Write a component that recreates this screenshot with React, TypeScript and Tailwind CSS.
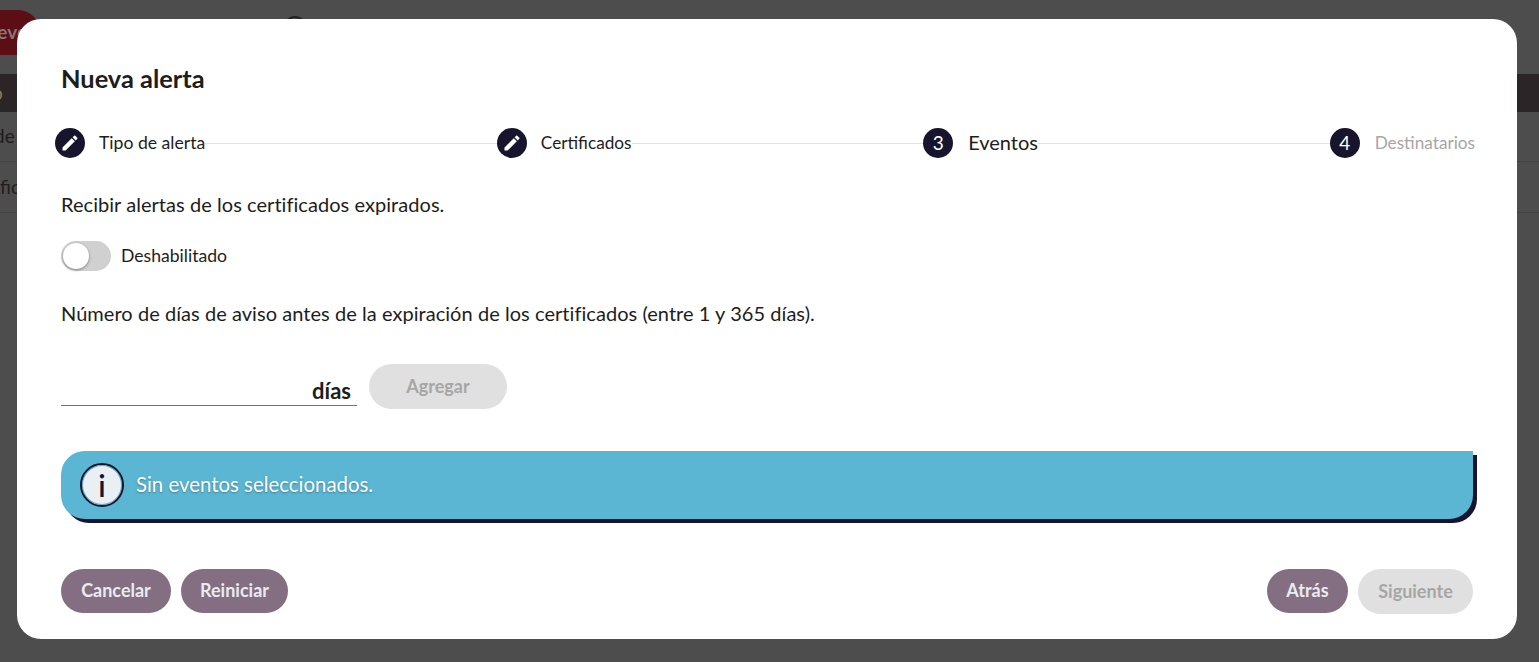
import { MdEdit } from "react-icons/md";

const font = "font-['Lato','Liberation_Sans',sans-serif]";

function StepIcon({ children }: { children: React.ReactNode }) {
  return (
    <span className="w-[30px] h-[30px] shrink-0 rounded-full bg-[#17152e] text-white flex items-center justify-center text-[19px]">
      {children}
    </span>
  );
}

function StepLine() {
  return <span className="flex-1 h-px bg-[#e0e0e0]"></span>;
}

function Background() {
  return (
    <div className="h-full bg-[#4d4d4d] text-[#1d1d1d] text-[19px] overflow-hidden">
      {/* HEADER */}
      <div className="h-[74px] pt-[10px] flex items-start">
        <span className="w-[80px] h-[45px] -ml-[40px] shrink-0 rounded-[22px] bg-[#5b0f15] text-[#8a7474] font-bold flex items-center justify-center">
          Nuevo
        </span>
        <span className="w-[24px] h-[24px] ml-[243px] mt-[6px] rounded-full border-2 border-[#222]"></span>
      </div>
      {/* TABLE */}
      <div className="h-[38px] bg-[#2c2528] text-[#8a7a60] flex items-center">
        <span className="-ml-[8px]">o</span>
      </div>
      <div className="h-[50px] border-b border-[#444] flex items-center">
        <span className="-ml-[6px]">de</span>
      </div>
      <div className="h-[51px] border-b border-[#444] flex items-center">fic</div>
    </div>
  );
}

export default function App() {
  return (
    <div className={`relative w-[1539px] h-[662px] overflow-hidden ${font}`}>
      <Background />

      {/* MODAL */}
      <div className="absolute left-[17px] top-[19px] w-[1500px] h-[620px] rounded-[24px] bg-white pt-[43px] px-[44px] text-[#1d1d1d] flex flex-col">
        <h1 className="h-[32px] text-[25.4px] leading-[32px] font-bold">Nueva alerta</h1>

        {/* STEPPER */}
        <div className="mt-[34px] h-[30px] -ml-[6px] mr-[-2px] flex items-center text-[17.6px]">
          <StepIcon>
            <MdEdit size={20} />
          </StepIcon>
          <span className="ml-[14px]">Tipo de alerta</span>
          <StepLine />
          <StepIcon>
            <MdEdit size={20} />
          </StepIcon>
          <span className="ml-[14px] text-[17.2px]">Certificados</span>
          <StepLine />
          <StepIcon>3</StepIcon>
          <span className="ml-[15px] pb-[2px] text-[20px]">Eventos</span>
          <StepLine />
          <StepIcon>4</StepIcon>
          <span className="ml-[15px] text-[17.2px] text-[#a6a6a6]">Destinatarios</span>
        </div>

        <p className="mt-[33px] h-[28px] text-[20px] leading-[27px] tracking-[0.05px]">
          Recibir alertas de los certificados expirados.
        </p>

        {/* TOGGLE */}
        <div className="mt-[22px] h-[30px] flex items-center gap-[10px] text-[17.6px]">
          <span className="w-[50px] h-[30px] rounded-full bg-[#d0d0d0] p-[2px]">
            <span className="block w-[26px] h-[26px] rounded-full bg-white shadow-[0_1px_3px_rgba(0,0,0,0.4)]"></span>
          </span>
          <span>Deshabilitado</span>
        </div>

        <p className="mt-[29px] h-[28px] text-[20px] leading-[27px] tracking-[0.05px]">
          Número de días de aviso antes de la expiración de los certificados (entre 1 y 365 días).
        </p>

        {/* DAYS INPUT */}
        <div className="mt-[36px] flex items-start gap-[12px]">
          <div className="w-[296px] h-[42px] border-b border-[#e8432f] flex items-end justify-end pr-[6px] text-[22px] leading-[28px] font-bold">
            días
          </div>
          <button className="w-[138px] h-[45px] pb-[1px] rounded-full bg-[#e0e0e0] text-[#a6a6a6] text-[18px] font-bold">
            Agregar
          </button>
        </div>

        {/* INFO BANNER */}
        <div className="mt-[42px] h-[68px] rounded-l-[24px] rounded-br-[24px] bg-[#5ab6d3] shadow-[4px_4px_0_#17152e] pl-[19px] flex items-center gap-[12px] text-white text-[20.4px]">
          <span className="w-[44px] h-[44px] rounded-full bg-[#e9eff2] border-2 border-[#17152e] shadow-[inset_0_0_0_1px_#5ab6d3] text-[#17152e] text-[30px] font-semibold flex items-center justify-center">
            i
          </span>
          <span className="pb-[1px] [text-shadow:0_1px_2px_rgba(0,0,0,0.3)]">Sin eventos seleccionados.</span>
        </div>

        {/* FOOTER */}
        <div className="mt-[50px] flex items-start text-[18px] font-bold">
          <button className="w-[110px] h-[44px] pb-[1px] rounded-full bg-[#846e81] text-[#e8ecf2]">Cancelar</button>
          <button className="w-[107px] h-[44px] pb-[1px] ml-[10px] rounded-full bg-[#846e81] text-[#e8ecf2]">Reiniciar</button>
          <button className="w-[81px] h-[44px] pb-[1px] ml-auto rounded-full bg-[#846e81] text-[#e8ecf2]">Atrás</button>
          <button className="w-[115px] h-[45px] pb-[1px] ml-[10px] rounded-full bg-[#e0e0e0] text-[#a6a6a6]">Siguiente</button>
        </div>
      </div>
    </div>
  );
}
